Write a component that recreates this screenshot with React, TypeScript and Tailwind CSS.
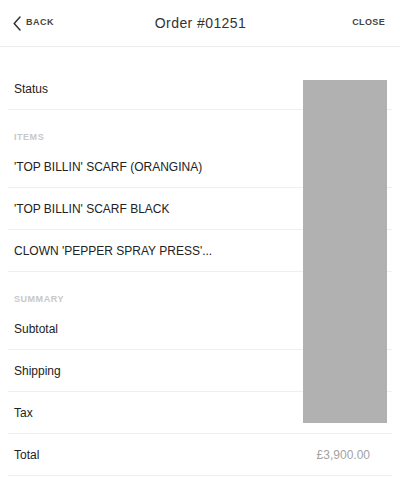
const font = { fontFamily: '"Liberation Sans", Arial, sans-serif' };

const Row = ({ label, value }: { label: string; value?: string }) => (
  <div className="mx-2 h-[42px] flex items-center justify-between border-b border-[#efefef] pl-[6px] pr-[22px]">
    <span className="text-[12px] text-[#222]">{label}</span>
    {value && <span className="text-[12px] text-[#a3a3a3]">{value}</span>}
  </div>
);

const SectionLabel = ({ children }: { children: React.ReactNode }) => (
  <div className="mx-2 pl-[6px] pt-[21px] pb-[3px] h-[36px]">
    <div className="text-[9px] leading-[12px] tracking-[0.06em] font-bold text-[#c8c8c8] uppercase">{children}</div>
  </div>
);

export default function App() {
  return (
    <div className="relative w-[400px] h-[479px] bg-white overflow-hidden" style={font}>
      {/* Header */}
      <div className="h-[47px] flex items-center justify-between pl-[13px] pr-[12px] border-b border-[#ececec]">
        <div className="flex items-center gap-[5px] w-[80px]">
          <svg width="8" height="15" viewBox="0 0 8 15" fill="none" className="mt-[1px]">
            <path d="M7 1 L1.2 7.5 L7 14" stroke="#333" strokeWidth="1.5" strokeLinecap="round" strokeLinejoin="round" />
          </svg>
          <span className="text-[9px] font-bold tracking-[0.06em] text-[#444]">BACK</span>
        </div>
        <div className="text-[14px] text-[#333] tracking-[0.03em]">Order #01251</div>
        <div className="w-[80px] flex justify-end pr-[3px]">
          <span className="text-[9px] font-bold tracking-[0.04em] text-[#444]">CLOSE</span>
        </div>
      </div>

      <div className="pt-[21px]">
        <Row label="Status" />
        <SectionLabel>Items</SectionLabel>
        <Row label="'TOP BILLIN' SCARF (ORANGINA)" />
        <Row label="'TOP BILLIN' SCARF BLACK" />
        <Row label="CLOWN 'PEPPER SPRAY PRESS'..." />
        <SectionLabel>Summary</SectionLabel>
        <Row label="Subtotal" />
        <Row label="Shipping" />
        <Row label="Tax" />
        <Row label="Total" value="£3,900.00" />
      </div>

      {/* redaction block */}
      <div className="absolute left-[303px] top-[80px] w-[84px] h-[343px] bg-[#b1b1b1]" />
    </div>
  );
}
